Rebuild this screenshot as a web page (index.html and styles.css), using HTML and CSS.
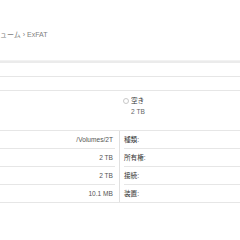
FILE: index.html
```html
<!DOCTYPE html>
<html lang="ja">
  <head>
    <meta charset="UTF-8" />
    <meta name="viewport" content="width=device-width, initial-scale=1.0" />
    <title>ExFAT</title>
    <link rel="stylesheet" href="styles.css">
  </head>
  <body>
    <main>
      <header class="toolbar">
        <div class="crumb">ューム › ExFAT</div>
      </header>
      <div class="strip"></div>
      <div class="strip short"></div>
      <section class="usage">
        <div class="legend">
          <div class="legend-name"><span class="dot"></span>空き</div>
          <div class="legend-size">2 TB</div>
        </div>
      </section>
      <section class="info">
        <div class="col left">
          <div class="row">/Volumes/2T</div>
          <div class="row">2 TB</div>
          <div class="row">2 TB</div>
          <div class="row">10.1 MB</div>
        </div>
        <div class="col right">
          <div class="row">種類:</div>
          <div class="row">所有権:</div>
          <div class="row">接続:</div>
          <div class="row">装置:</div>
        </div>
      </section>
    </main>
  </body>
</html>
```

FILE: styles.css
```css
body {
  margin: 0;
  background: #fff;
  font-family: "Liberation Sans", "Noto Sans CJK JP", sans-serif;
  font-size: 6.6px;
  color: #555;
  overflow: hidden;
}
main {
  width: 240px;
  height: 240px;
  overflow: hidden;
}
.toolbar {
  height: 60px;
  border-bottom: 1px solid #f2f2f2;
  box-shadow: 0 2px 0 #ebebeb;
  overflow: hidden;
}
.crumb {
  padding-top: 31px;
  line-height: 8px;
  font-size: 7px;
  white-space: nowrap;
  color: #808080;
}
.strip {
  height: 15px;
  border-bottom: 1px solid #e6e6e6;
}
.strip.short {
  height: 13px;
}
.usage {
  height: 39px;
  border-bottom: 1px solid #e6e6e6;
  display: flex;
  justify-content: flex-end;
}
.legend {
  width: 117px;
  padding-top: 6px;
}
.legend-name {
  display: flex;
  align-items: center;
  gap: 2px;
  line-height: 8px;
  color: #333;
}
.dot {
  width: 4px;
  height: 4px;
  border: 1px solid #c8c8c8;
  border-radius: 50%;
}
.legend-size {
  padding-left: 8px;
  margin-top: 3px;
  line-height: 8px;
  color: #666;
}
.info {
  display: grid;
  grid-template-columns: 120px 1fr;
  border-bottom: 1px solid #e6e6e6;
}
.col.left {
  padding-right: 4px;
  border-right: 1px solid #e0e0e0;
}
.col.right {
  padding-left: 4px;
}
.row {
  height: 17px;
  line-height: 17px;
  border-bottom: 1px solid #e6e6e6;
  white-space: nowrap;
}
.row:last-child {
  border-bottom: none;
}
.left .row {
  text-align: right;
  padding-right: 2px;
}
.right .row {
  color: #333;
}
```
